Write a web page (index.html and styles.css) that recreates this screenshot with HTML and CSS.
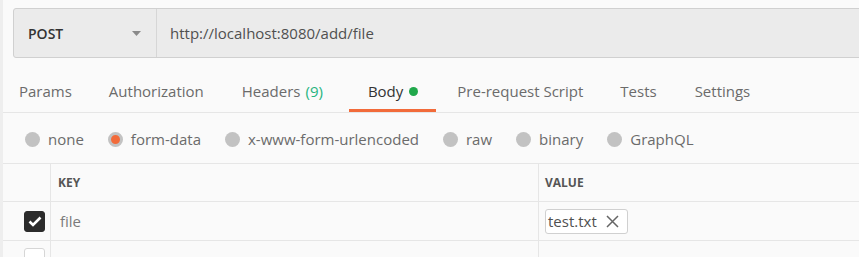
FILE: index.html
```html
<!DOCTYPE html>
<html>
<head>
<meta charset="utf-8">
<link rel="stylesheet" href="styles.css">
</head>
<body>
<div class="page">
  <div class="urlbar">
    <div class="method">
      <span class="method-name">POST</span>
      <svg class="caret" width="9" height="5" viewBox="0 0 9 5"><path d="M0 0h9L4.5 5z" fill="#8a8a8a"/></svg>
    </div>
    <div class="url">http://localhost:8080/add/file</div>
  </div>

  <div class="tabs">
    <div class="tab">Params</div>
    <div class="tab">Authorization</div>
    <div class="tab">Headers <span class="count">(9)</span></div>
    <div class="tab active">Body <span class="dot"></span></div>
    <div class="tab pre">Pre-request Script</div>
    <div class="tab">Tests</div>
    <div class="tab">Settings</div>
  </div>

  <div class="radios">
    <label class="radio"><span class="circle"></span>none</label>
    <label class="radio"><span class="circle on"></span>form-data</label>
    <label class="radio"><span class="circle"></span>x-www-form-urlencoded</label>
    <label class="radio"><span class="circle"></span>raw</label>
    <label class="radio"><span class="circle"></span>binary</label>
    <label class="radio"><span class="circle"></span>GraphQL</label>
  </div>

  <div class="table">
    <div class="row head">
      <div class="cell chk"></div>
      <div class="cell key">KEY</div>
      <div class="cell val">VALUE</div>
    </div>
    <div class="row">
      <div class="cell chk">
        <span class="checkbox checked">
          <svg width="14" height="11" viewBox="0 0 14 11"><path d="M1.5 5.5l3.5 3.5 7.5-7.5" fill="none" stroke="#fff" stroke-width="2.6"/></svg>
        </span>
      </div>
      <div class="cell key text">file</div>
      <div class="cell val">
        <span class="chip">test.txt<span class="x">
          <svg width="13" height="13" viewBox="0 0 13 13"><path d="M1 1l11 11M12 1L1 12" stroke="#666" stroke-width="1.5"/></svg>
        </span></span>
      </div>
    </div>
    <div class="row last">
      <div class="cell chk"><span class="checkbox"></span></div>
      <div class="cell key"></div>
      <div class="cell val"></div>
    </div>
  </div>
</div>
</body>
</html>
```

FILE: styles.css
```css
html, body {
  margin: 0;
  padding: 0;
  background: #fafafa;
}
body {
  font-family: "Open Sans", "Liberation Sans", sans-serif;
  font-size: 15px;
  color: #505050;
  width: 859px;
  height: 257px;
  overflow: hidden;
}
.page {
  border-left: 3px solid #eeeeee;
  height: 257px;
  box-sizing: border-box;
  overflow: hidden;
}
.urlbar {
  display: flex;
  margin: 8px -10px 0 10px;
  height: 50px;
  box-sizing: border-box;
  border: 1px solid #d0d0d0;
  border-radius: 3px;
  background: #ebebeb;
}
.method {
  width: 143px;
  display: flex;
  align-items: center;
  justify-content: space-between;
  padding: 0 15px 0 14px;
  box-sizing: border-box;
  border-right: 1px solid #d6d6d6;
}
.method-name {
  color: #333;
  font-weight: 600;
  font-size: 14px;
}
.caret { display: block; }
.url {
  display: flex;
  align-items: center;
  padding-left: 13px;
  color: #505050;
}
.tabs {
  display: flex;
  height: 55px;
  box-sizing: border-box;
  border-bottom: 1px solid #e6e6e6;
  padding-left: 16px;
}
.tab {
  display: flex;
  align-items: flex-end;
  padding: 0 0 11px;
  margin-right: 38px;
  color: #6b6b6b;
  line-height: 20px;
  position: relative;
}
.tab:nth-child(1) { margin-right: 37px; }
.tab:nth-child(3) { margin-right: 26px; }
.tab.pre { margin-right: 37px; }
.tab .count { color: #26b47f; margin-left: 5px; }
.tab.active {
  color: #333;
  padding: 0 18px 11px 19px;
  margin-right: 21px;
}
.tab.active::after {
  content: "";
  position: absolute;
  left: 0;
  right: 0;
  bottom: 0;
  height: 3px;
  background: #f26b3a;
}
.dot {
  width: 9px;
  height: 9px;
  border-radius: 50%;
  background: #20a84b;
  margin: 0 0 5px 6px;
  display: inline-block;
}
.radios {
  display: flex;
  align-items: center;
  height: 51px;
  box-sizing: border-box;
  padding-left: 22px;
  padding-top: 2px;
  color: #6b6b6b;
  border-bottom: 1px solid #e6e6e6;
}
.radio {
  display: flex;
  align-items: center;
  margin-right: 24px;
}
.circle {
  width: 15px;
  height: 15px;
  border-radius: 50%;
  background: #c2c2c2;
  margin-right: 8px;
  box-sizing: border-box;
}
.circle.on {
  background: #f26b3a;
  border: 3.5px solid #c2c2c2;
}
.row {
  display: flex;
  height: 39px;
  box-sizing: border-box;
  border-bottom: 1px solid #e6e6e6;
}
.row.head { height: 38px; }
.cell {
  display: flex;
  align-items: center;
  box-sizing: border-box;
}
.cell.chk {
  width: 48px;
  border-right: 1px solid #e6e6e6;
  justify-content: flex-end;
  padding-right: 5px;
}
.cell.key {
  width: 488px;
  border-right: 1px solid #e6e6e6;
  padding-left: 7px;
}
.cell.val {
  flex: 1;
  padding-left: 6px;
}
.head .cell {
  font-size: 12px;
  font-weight: 700;
  color: #555;
}
.cell.text { color: #7a7a7a; padding-left: 9px; }
.checkbox {
  width: 21px;
  height: 21px;
  border-radius: 3px;
  box-sizing: border-box;
  border: 1px solid #d6d6d6;
  background: #fff;
  display: flex;
  align-items: center;
  justify-content: center;
}
.checkbox.checked {
  background: #2b2b2b;
  border-color: #2b2b2b;
}
.row.last .cell { align-items: flex-start; padding-top: 8px; }
.row.last .cell.chk { padding-top: 7px; }
.chip {
  display: flex;
  align-items: center;
  height: 25px;
  box-sizing: border-box;
  border: 1px solid #d0d0d0;
  border-radius: 3px;
  background: #fff;
  padding: 0 8px 0 2px;
  color: #505050;
}
.chip .x {
  display: flex;
  margin-left: 9px;
}
```
